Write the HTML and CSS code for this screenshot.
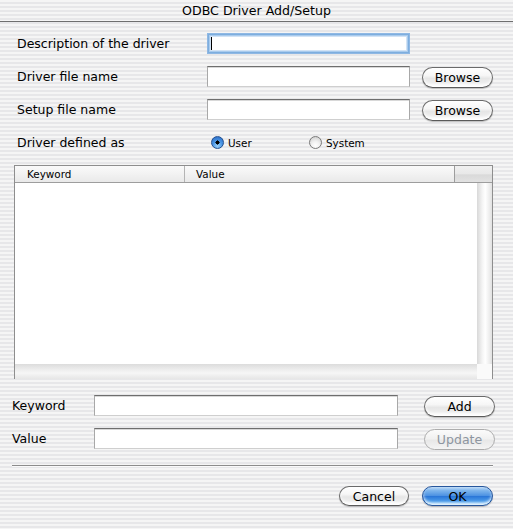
FILE: index.html
```html
<!DOCTYPE html>
<html>
<head>
<meta charset="utf-8">
<link rel="stylesheet" href="styles.css">
</head>
<body>
<div class="window">
  <div class="titlebar">ODBC Driver Add/Setup</div>

  <div class="form">
    <span class="lbl">Description of the driver</span>
    <div class="field focus"><span class="caret"></span></div>
    <span></span>

    <span class="lbl">Driver file name</span>
    <div class="field"></div>
    <button class="btn">Browse</button>

    <span class="lbl">Setup file name</span>
    <div class="field"></div>
    <button class="btn">Browse</button>

    <span class="lbl">Driver defined as</span>
    <div class="radios">
      <span class="opt"><span class="radio on"></span><span class="rlabel">User</span></span>
      <span class="opt"><span class="radio"></span><span class="rlabel">System</span></span>
    </div>
    <span></span>
  </div>

  <div class="table">
    <div class="thead">
      <div class="th th-key">Keyword</div>
      <div class="th th-val">Value</div>
      <div class="th th-corner"></div>
    </div>
    <div class="tbody">
      <div class="rows"></div>
      <div class="vtrack"></div>
    </div>
    <div class="tfoot">
      <div class="htrack"></div>
      <div class="corner"></div>
    </div>
  </div>

  <div class="kv">
    <span class="lbl">Keyword</span>
    <div class="field"></div>
    <button class="btn">Add</button>
    <span class="lbl">Value</span>
    <div class="field"></div>
    <button class="btn disabled">Update</button>
  </div>

  <div class="sep"></div>

  <div class="actions">
    <button class="btn">Cancel</button>
    <button class="btn primary">OK</button>
  </div>
</div>
</body>
</html>
```

FILE: styles.css
```css
* { box-sizing: border-box; }
html, body {
  margin: 0;
  padding: 0;
}
body {
  width: 513px;
  height: 529px;
  overflow: hidden;
  font-family: "DejaVu Sans", "Liberation Sans", sans-serif;
  font-size: 12.5px;
  color: #000;
  background: repeating-linear-gradient(to bottom, #f5f5f5 0px, #f5f5f5 2px, #e7e7e9 2px, #e7e7e9 4px);
}
.window {
  width: 513px;
  height: 529px;
}
.titlebar {
  height: 22px;
  line-height: 21px;
  text-align: center;
  font-size: 12.6px;
  border-bottom: 1px solid #6f6f6f;
}
.form {
  display: grid;
  grid-template-columns: 178px 203px 71px;
  grid-auto-rows: 21px;
  column-gap: 12px;
  row-gap: 12px;
  padding: 11px 0 0 17px;
}
.lbl {
  display: flex;
  align-items: center;
  white-space: nowrap;
}
.field {
  background: #fff;
  border: 1px solid #a8a8a8;
  border-top-color: #6e6e6e;
  border-bottom-color: #cfcfcf;
  box-shadow: inset 0 1px 0 #d8d8d8;
  height: 21px;
}
.field.focus {
  position: relative;
  border: 1px solid #8fb8e4;
  box-shadow: inset 0 0 0 1px #7eaede, inset 0 0 0 2px #a9cbee, inset 0 0 0 3px #d2e3f5;
}
.caret {
  position: absolute;
  left: 3px;
  top: 3px;
  width: 1px;
  height: 13px;
  background: #000;
}
.btn {
  font-family: "DejaVu Sans", "Liberation Sans", sans-serif;
  font-size: 12.5px;
  color: #000;
  height: 21px;
  padding: 0;
  margin-top: 1px;
  border: 1px solid #6a6a6a;
  border-bottom-color: #5a5a5a;
  border-radius: 11px;
  background: linear-gradient(to bottom, #ffffff 0%, #f6f6f6 40%, #e6e6e6 55%, #ececec 75%, #ffffff 100%);
  box-shadow: 0 1px 1px rgba(0,0,0,0.22), inset 0 -2px 3px rgba(255,255,255,0.8);
  line-height: 18px;
}
.btn.disabled {
  color: #8d95a0;
  border-color: #acacac;
  background: linear-gradient(to bottom, #fbfbfb 0%, #f1f1f1 45%, #e8e8e8 55%, #f4f4f4 100%);
  box-shadow: none;
}
.btn.primary {
  border-color: #27569c;
  background: linear-gradient(to bottom, #c0dcf7 0%, #7db4ec 20%, #4d92e2 48%, #2a76d8 52%, #4a9ae8 78%, #9fd6fb 100%);
}
.radios {
  display: flex;
  align-items: center;
  padding-left: 4px;
}
.opt {
  display: flex;
  align-items: center;
  width: 98px;
}
.radio {
  width: 13px;
  height: 13px;
  border-radius: 50%;
  border: 1px solid #7a7a7a;
  background: radial-gradient(circle at 50% 75%, #ffffff 0%, #f0f0f0 40%, #c8c8c8 100%);
  flex: none;
}
.radio.on {
  border-color: #23508f;
  background: radial-gradient(circle at 50% 50%, #000 0, #000 1.9px, transparent 2.2px),
              radial-gradient(circle at 50% 80%, #9fd4fb 0%, #4a96e4 45%, #2667c4 100%);
}
.rlabel {
  font-size: 10.4px;
  margin-left: 4px;
}
.table {
  margin: 12px 20px 0 14px;
  height: 214px;
  border: 1px solid #8e8e8e;
  border-bottom: none;
  display: flex;
  flex-direction: column;
  background: #fff;
}
.thead {
  display: flex;
  height: 17px;
  border-bottom: 1px solid #9d9d9d;
  background: linear-gradient(to bottom, #fafafa 0%, #f2f2f2 50%, #e9e9e9 100%);
  font-size: 10.4px;
}
.th {
  display: flex;
  align-items: center;
}
.th-key {
  width: 170px;
  padding-left: 12px;
  border-right: 1px solid #b4b4b4;
}
.th-val {
  flex: 1;
  padding-left: 11px;
  border-right: 1px solid #9d9d9d;
}
.th-corner {
  width: 37px;
  background: linear-gradient(to bottom, #f0f0f0 0%, #e8e8e8 50%, #d9d9d9 55%, #e2e2e2 100%);
}
.tbody {
  flex: 1;
  display: flex;
}
.rows {
  flex: 1;
}
.vtrack {
  width: 15px;
  background: linear-gradient(to right, #d8d8d8 0%, #f4f4f4 35%, #ffffff 55%, #e2e2e2 100%);
}
.tfoot {
  height: 15px;
  display: flex;
}
.htrack {
  flex: 1;
  background: linear-gradient(to bottom, #dcdcdc 0%, #ececec 35%, #f6f6f6 60%, #e6e6e6 100%);
}
.corner {
  width: 15px;
  background: #fafafa;
}
.kv {
  display: grid;
  grid-template-columns: 56px 304px 71px;
  grid-auto-rows: 21px;
  column-gap: 26px;
  row-gap: 12px;
  padding: 16px 0 0 12px;
}
.sep {
  margin: 16px 20px 0 12px;
  height: 2px;
  border-top: 1px solid #8c8c8c;
  border-bottom: 1px solid #fafafa;
}
.actions {
  display: flex;
  justify-content: flex-end;
  gap: 13px;
  padding: 19px 20px 0 0;
}
.actions .btn {
  margin-top: 0;
  height: 20px;
  line-height: 17px;
}
.actions .btn:first-child { width: 70px; }
.actions .btn.primary { width: 71px; }
```
